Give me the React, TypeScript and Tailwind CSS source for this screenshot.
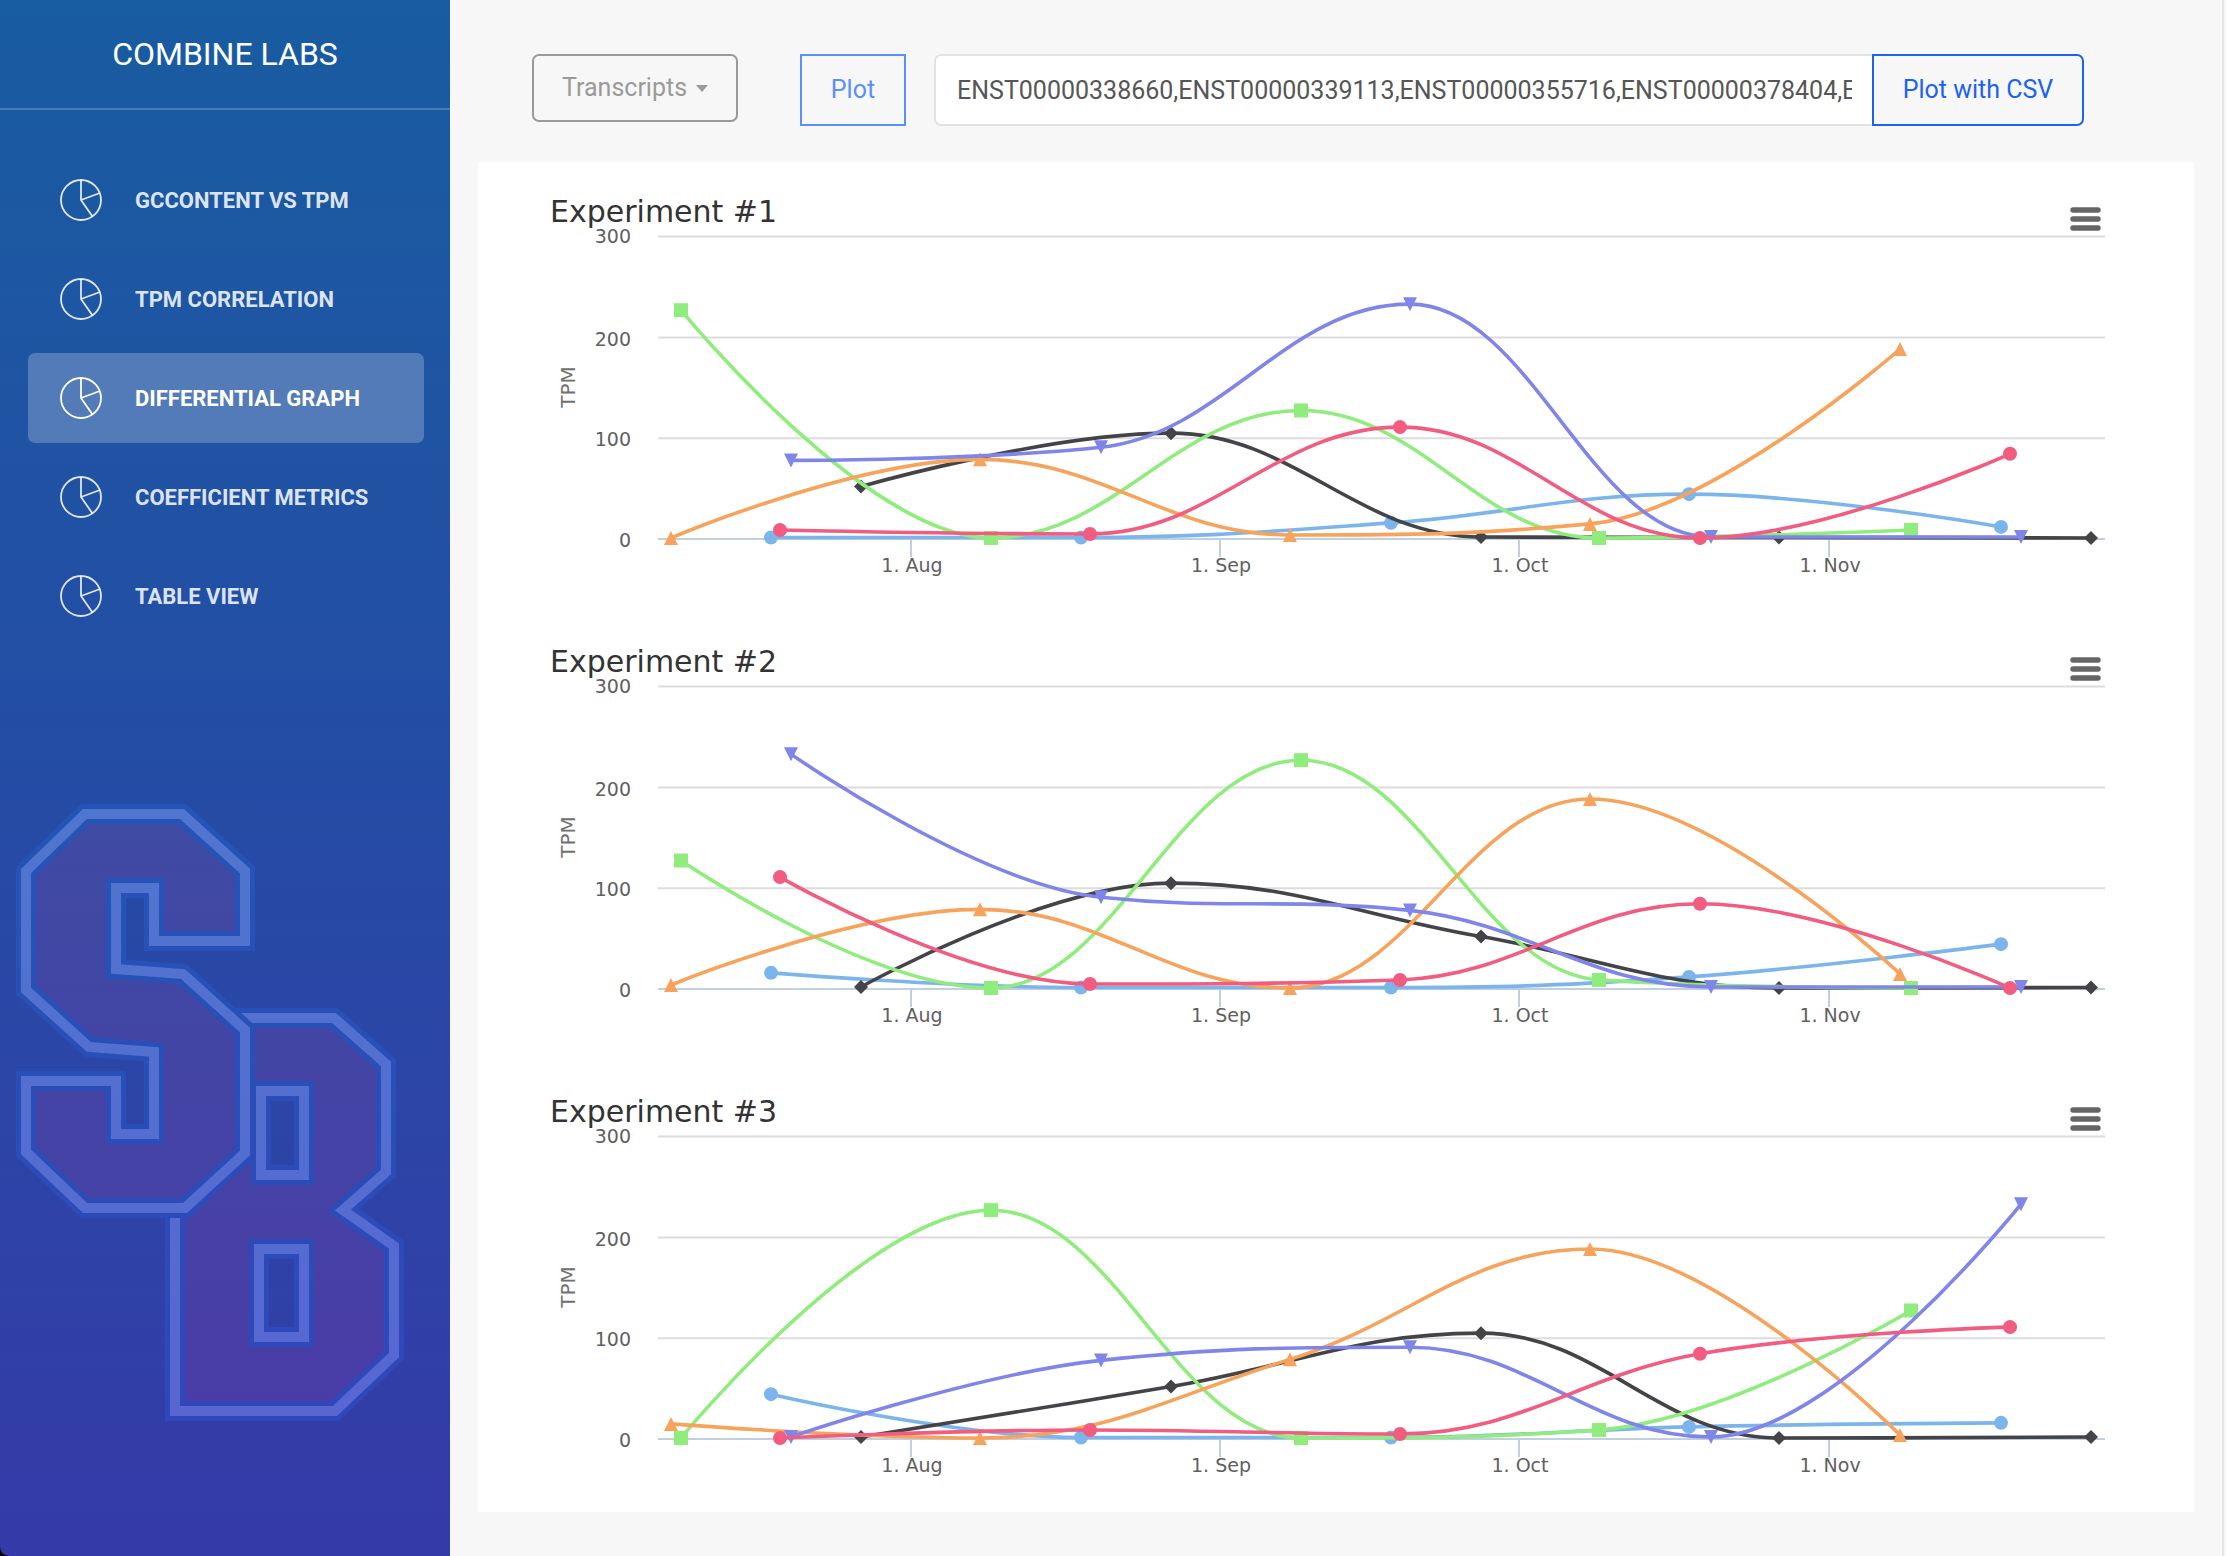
import React from 'react';

type Point = { x: number; y: number };
type Marker = 'circle' | 'diamond' | 'square' | 'triangle' | 'triangle-down';
type SeriesStyle = { name: string; color: string; marker: Marker; xs: number[] };

const NAV_ITEMS = ['GCContent vs TPM', 'TPM Correlation', 'Differential Graph', 'Coefficient Metrics', 'Table View'];
const ACTIVE_ITEM = 'Differential Graph';

const SERIES: SeriesStyle[] = [
  { name: 'blue', color: '#7cb5ec', marker: 'circle', xs: [293, 603, 913, 1211, 1523] },
  { name: 'black', color: '#434348', marker: 'diamond', xs: [383, 693, 1003, 1301, 1613] },
  { name: 'green', color: '#90ed7d', marker: 'square', xs: [203, 513, 823, 1121, 1433] },
  { name: 'orange', color: '#f7a35c', marker: 'triangle', xs: [193, 502, 812, 1112, 1422] },
  { name: 'purple', color: '#8085e9', marker: 'triangle-down', xs: [313, 623, 932, 1233, 1543] },
  { name: 'red', color: '#f15c80', marker: 'circle', xs: [302, 612, 922, 1222, 1532] },
];

const EXPERIMENTS: { title: string; values: Record<string, number[]> }[] = [
  {
    title: 'Experiment #1',
    values: {
      blue: [1.5, 1.5, 16, 44.5, 12],
      black: [52, 105, 2, 1.5, 1],
      green: [227, 1, 127.5, 1, 9],
      orange: [1, 79, 4, 15, 188.5],
      purple: [78, 91, 233, 2, 2],
      red: [9, 5, 111, 1, 84.5],
    },
  },
  {
    title: 'Experiment #2',
    values: {
      blue: [16, 1.5, 1.5, 12, 44.5],
      black: [2, 105, 52, 1, 1.5],
      green: [127.5, 1, 227, 9, 1],
      orange: [4, 79, 1, 188.5, 15],
      purple: [233, 91, 78, 2, 2],
      red: [111, 5, 9, 84.5, 1],
    },
  },
  {
    title: 'Experiment #3',
    values: {
      blue: [44.5, 1.5, 1.5, 12, 16],
      black: [2, 52, 105, 1, 2],
      green: [1, 227, 1, 9, 127.5],
      orange: [15, 1, 79, 188.5, 4],
      purple: [2, 78, 91, 2, 233],
      red: [1, 9, 5, 84.5, 111],
    },
  },
];

const BASE_Y = 377;
const UNIT = 1.008;
const yOf = (value: number) => BASE_Y - value * UNIT;

const Y_TICKS = [
  { value: 300, baseline: 81 },
  { value: 200, baseline: 184 },
  { value: 100, baseline: 284 },
  { value: 0, baseline: 385 },
];
const X_TICKS = [
  { label: '1. Aug', x: 433 },
  { label: '1. Sep', x: 742 },
  { label: '1. Oct', x: 1041 },
  { label: '1. Nov', x: 1351 },
];

// Smooth curve whose control points never overshoot the neighbouring values.
function splinePath(points: Point[]): string {
  const smoothing = 1.5;
  const denom = smoothing + 1;
  let previousRight: Point = points[0];
  let d = `M ${points[0].x} ${points[0].y}`;
  for (let i = 1; i < points.length; i++) {
    const last = points[i - 1];
    const p = points[i];
    const next = points[i + 1];
    let left: Point = p;
    let right: Point = p;
    if (next) {
      const lx = (smoothing * p.x + last.x) / denom;
      let ly = (smoothing * p.y + last.y) / denom;
      const rx = (smoothing * p.x + next.x) / denom;
      let ry = (smoothing * p.y + next.y) / denom;
      const correction = ((ry - ly) * (rx - p.x)) / (rx - lx) + p.y - ry;
      ly += correction;
      ry += correction;
      if (ly > last.y && ly > p.y) {
        ly = Math.max(last.y, p.y);
        ry = 2 * p.y - ly;
      } else if (ly < last.y && ly < p.y) {
        ly = Math.min(last.y, p.y);
        ry = 2 * p.y - ly;
      }
      if (ry > next.y && ry > p.y) {
        ry = Math.max(next.y, p.y);
        ly = 2 * p.y - ry;
      } else if (ry < next.y && ry < p.y) {
        ry = Math.min(next.y, p.y);
        ly = 2 * p.y - ry;
      }
      left = { x: lx, y: ly };
      right = { x: rx, y: ry };
    }
    d += ` C ${previousRight.x} ${previousRight.y} ${left.x} ${left.y} ${p.x} ${p.y}`;
    previousRight = right;
  }
  return d;
}

function MarkerShape({ kind, x, y, color }: { kind: Marker; x: number; y: number; color: string }) {
  const r = 7;
  switch (kind) {
    case 'circle':
      return <circle cx={x} cy={y} r={r} fill={color} />;
    case 'square':
      return <rect x={x - r} y={y - r} width={2 * r} height={2 * r} fill={color} />;
    case 'diamond':
      return <path d={`M ${x} ${y - r} L ${x + r} ${y} L ${x} ${y + r} L ${x - r} ${y} Z`} fill={color} />;
    case 'triangle':
      return <path d={`M ${x} ${y - r} L ${x + r} ${y + r} L ${x - r} ${y + r} Z`} fill={color} />;
    case 'triangle-down':
      return <path d={`M ${x - r} ${y - r} L ${x + r} ${y - r} L ${x} ${y + r} Z`} fill={color} />;
  }
}

function Chart({ title, values }: { title: string; values: Record<string, number[]> }) {
  return (
    <section className="grid font-['DejaVu_Sans',sans-serif]">
      <svg viewBox="0 0 1716 450" className="col-start-1 row-start-1 block h-auto w-full" role="img" aria-label={title}>
        {Y_TICKS.slice(0, 3).map((t) => (
          <path key={t.value} d={`M 180 ${yOf(t.value)} H 1627`} stroke="#dcdcdc" strokeWidth="2" />
        ))}
        <path d={`M 180 ${BASE_Y} H 1627`} stroke="#c0d0e0" strokeWidth="2" />
        {X_TICKS.map((t) => (
          <g key={t.label}>
            <path d={`M ${t.x} ${BASE_Y} v 18`} stroke="#c0d0e0" strokeWidth="2" />
            <text x={t.x + 1} y="410" textAnchor="middle" fontSize="19" fill="#606060">
              {t.label}
            </text>
          </g>
        ))}
        {Y_TICKS.map((t) => (
          <text key={t.value} x="153" y={t.baseline} textAnchor="end" fontSize="19" fill="#606060">
            {t.value}
          </text>
        ))}
        <text transform="translate(97 225) rotate(-90)" textAnchor="middle" fontSize="20" fill="#707070">
          TPM
        </text>
        {SERIES.map((s) => {
          const points = s.xs.map((x, i) => ({ x, y: yOf(values[s.name][i]) }));
          return (
            <g key={s.name}>
              <path d={splinePath(points)} fill="none" stroke={s.color} strokeWidth="3.6" strokeLinejoin="round" strokeLinecap="round" />
              {points.map((p) => (
                <MarkerShape key={p.x} kind={s.marker} x={p.x} y={p.y} color={s.color} />
              ))}
            </g>
          );
        })}
      </svg>
      <header className="col-start-1 row-start-1 flex items-start justify-between self-start pt-8 pr-[93px] pl-[72px]">
        <h2 className="text-[30px] leading-9 text-[#333333]">{title}</h2>
        <button type="button" aria-label={`${title} menu`} className="mt-3">
          <svg width="31" height="26" viewBox="0 0 31 26" className="block">
            <path d="M3 4 H28 M3 13 H28 M3 22 H28" stroke="#666666" strokeWidth="5.4" strokeLinecap="round" />
          </svg>
        </button>
      </header>
    </section>
  );
}

function PieIcon() {
  return (
    <svg width="42" height="42" viewBox="0 0 42 42" fill="none" stroke="currentColor" strokeWidth="1.8" className="shrink-0">
      <circle cx="21" cy="21" r="20" />
      <path d="M21 1 V21 L32.5 37.5 M21 21 L40 14" />
    </svg>
  );
}

const S_OUTLINE =
  'M85 35 H182 L245 92 V162 H154 V109 H116 V190 L183 195 L245 251 V374 L185 429 H85 L26 373 V302 H116 V355 H154 V273 L89 268 L26 211 V92 Z';
const B_OUTLINE =
  'M235 239 H334 L386 285 V393 L343 431 L394 467 V576 L335 632 H175 V420 L235 360 Z M261 312 H304 V396 H261 Z M259 470 H304 V558 H259 Z';

function TeamLogo() {
  return (
    <svg viewBox="0 0 450 662" className="block h-auto w-full" aria-hidden="true">
      <defs>
        <linearGradient id="logo-fill" gradientUnits="userSpaceOnUse" x1="0" y1="22" x2="0" y2="642">
          <stop offset="0" stopColor="#3e4ba3" />
          <stop offset="1" stopColor="#4a3ca7" />
        </linearGradient>
        <linearGradient id="logo-line" gradientUnits="userSpaceOnUse" x1="0" y1="22" x2="0" y2="642">
          <stop offset="0" stopColor="#4f76ce" />
          <stop offset="1" stopColor="#5866d2" />
        </linearGradient>
        <linearGradient id="logo-edge" gradientUnits="userSpaceOnUse" x1="0" y1="22" x2="0" y2="642">
          <stop offset="0" stopColor="#2455b6" />
          <stop offset="1" stopColor="#2f47ba" />
        </linearGradient>
      </defs>
      {[B_OUTLINE, S_OUTLINE].map((d) => (
        <g key={d}>
          <path d={d} fill="url(#logo-fill)" fillRule="evenodd" stroke="url(#logo-edge)" strokeWidth="20" />
          <path d={d} fill="none" stroke="url(#logo-line)" strokeWidth="10" />
        </g>
      ))}
    </svg>
  );
}

function Sidebar() {
  return (
    <aside className="flex w-[450px] shrink-0 flex-col rounded-bl-[9px] bg-linear-to-b from-[#185ca1] via-[#244ca5] to-[#343aa8] text-white">
      <div className="border-b-2 border-white/20 pt-[34px] pb-[34px] text-center text-[32px] leading-10">
        <a href="#home">COMBINE LABS</a>
      </div>
      <nav className="mt-[45px] flex flex-col gap-[9px] pr-[26px] pl-7" aria-label="Main">
        {NAV_ITEMS.map((item) => (
          <a
            key={item}
            href="#view"
            aria-current={item === ACTIVE_ITEM ? 'page' : undefined}
            className={
              item === ACTIVE_ITEM
                ? 'flex h-[90px] items-center gap-[33px] rounded-[7px] bg-white/23 pl-8 text-[22px] font-bold uppercase'
                : 'flex h-[90px] items-center gap-[33px] rounded-[7px] pl-8 text-[22px] font-bold text-white/86 uppercase'
            }
          >
            <PieIcon />
            {item}
          </a>
        ))}
      </nav>
      <div className="mt-[138px]">
        <TeamLogo />
      </div>
    </aside>
  );
}

function Toolbar() {
  return (
    <form className="flex items-start pt-[54px] pr-[110px] pb-9 pl-[54px] text-[25px]" onSubmit={(e) => e.preventDefault()}>
      <div className="mr-[62px] grid w-[206px] items-center">
        <select
          aria-label="Feature type"
          className="col-start-1 row-start-1 h-[68px] w-full appearance-none rounded-[7px] border-2 border-[#9a9a9a] bg-transparent pl-7 text-[#9a9a9a]"
        >
          <option>Transcripts</option>
          <option>Genes</option>
        </select>
        <svg width="12" height="7" viewBox="0 0 12 7" className="pointer-events-none col-start-1 row-start-1 mr-[30px] justify-self-end">
          <path d="M0 0 H12 L6 7 Z" fill="#9a9a9a" />
        </svg>
      </div>
      <button type="submit" className="mr-7 h-[72px] w-[106px] border-2 border-[#5b8ff9] text-[#5b8ff9]">
        Plot
      </button>
      <input
        type="text"
        aria-label="Transcript identifiers"
        className="h-[72px] min-w-0 flex-1 rounded-l-[7px] border-2 border-r-0 border-[#e3e3e3] bg-white pr-5 pl-[21px] text-[#565656]"
        defaultValue="ENST00000338660,ENST00000339113,ENST00000355716,ENST00000378404,ENST00000382369"
      />
      <button type="button" className="h-[72px] w-[212px] rounded-r-[7px] border-2 border-[#1d62f0] text-[#1d62f0]">
        Plot with CSV
      </button>
    </form>
  );
}

export default function App() {
  return (
    <div className="flex min-h-screen bg-black font-[Roboto,sans-serif]">
      <Sidebar />
      <main className="flex min-w-0 flex-1 bg-[#f7f7f7] pr-0.5">
        <div className="min-w-0 flex-1 border-r-2 border-[#e6e6e6] px-7 pb-11">
          <Toolbar />
          <div className="bg-white">
            {EXPERIMENTS.map((e) => (
              <Chart key={e.title} title={e.title} values={e.values} />
            ))}
          </div>
        </div>
      </main>
    </div>
  );
}
